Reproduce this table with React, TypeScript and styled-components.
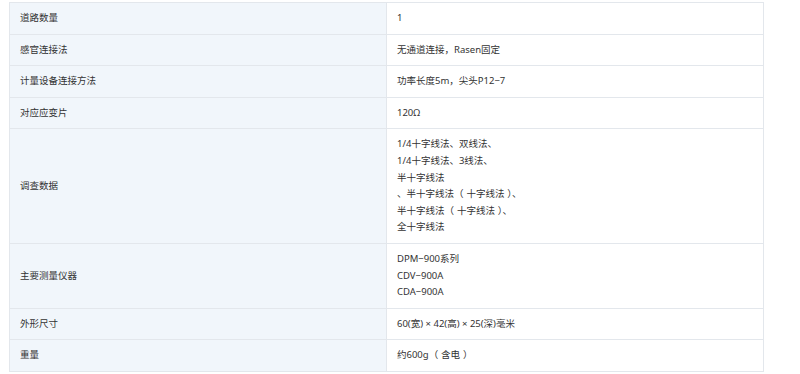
import React from "react";
import styled, { createGlobalStyle } from "styled-components";

const Global = createGlobalStyle`
  html, body { margin: 0; padding: 0; background: #ffffff; }
  body { font-family: "Noto Sans", "Noto Sans CJK SC", sans-serif; }
`;

const Page = styled.div`
  padding: 2px 0 0 9px;
`;

const Table = styled.div`
  width: 755px;
  display: grid;
  grid-template-columns: 377px 1fr;
  border: 1px solid #e3e7ec;
  box-sizing: border-box;
  font-size: 9.5px;
  line-height: 16.6px;
  color: #333333;
`;

const Label = styled.div<{ $last?: boolean }>`
  background: #f1f6fb;
  padding: 7px 10px;
  display: flex;
  align-items: center;
  border-right: 1px solid #e3e7ec;
  border-bottom: ${(p) => (p.$last ? "none" : "1px solid #e3e7ec")};
`;

const Value = styled.div<{ $last?: boolean }>`
  background: #ffffff;
  padding: 7px 10px;
  border-bottom: ${(p) => (p.$last ? "none" : "1px solid #e3e7ec")};
`;

const Line = styled.div`
  white-space: nowrap;
`;

const Paren = styled.span<{ $open: boolean }>`
  margin-left: ${(p) => (p.$open ? "0" : "0.3em")};
  margin-right: ${(p) => (p.$open ? "0.3em" : "0")};
`;

function renderLine(text: string) {
  const parts = text.split(/([（）])/);
  return parts.map((p, i) =>
    p === "（" || p === "）" ? (
      <Paren key={i} $open={p === "（"}>
        {p}
      </Paren>
    ) : (
      <React.Fragment key={i}>{p}</React.Fragment>
    )
  );
}

const rows: { label: string; lines: string[] }[] = [
  { label: "道路数量", lines: ["1"] },
  { label: "感官连接法", lines: ["无通道连接，Rasen固定"] },
  { label: "计量设备连接方法", lines: ["功率长度5m，尖头P12−7"] },
  { label: "对应应变片", lines: ["120Ω"] },
  {
    label: "调查数据",
    lines: [
      "1/4十字线法、双线法、",
      "1/4十字线法、3线法、",
      "半十字线法",
      "、半十字线法（十字线法）、",
      "半十字线法（十字线法）、",
      "全十字线法",
    ],
  },
  { label: "主要测量仪器", lines: ["DPM−900系列", "CDV−900A", "CDA−900A"] },
  { label: "外形尺寸", lines: ["60(宽) × 42(高) × 25(深)毫米"] },
  { label: "重量", lines: ["约600g（含电）"] },
];

export default function App() {
  return (
    <>
      <Global />
      <Page>
        <Table>
          {rows.map((r, i) => {
            const last = i === rows.length - 1;
            return (
              <React.Fragment key={r.label}>
                <Label $last={last}>{r.label}</Label>
                <Value $last={last}>
                  {r.lines.map((l, j) => (
                    <Line key={j}>{renderLine(l)}</Line>
                  ))}
                </Value>
              </React.Fragment>
            );
          })}
        </Table>
      </Page>
    </>
  );
}
